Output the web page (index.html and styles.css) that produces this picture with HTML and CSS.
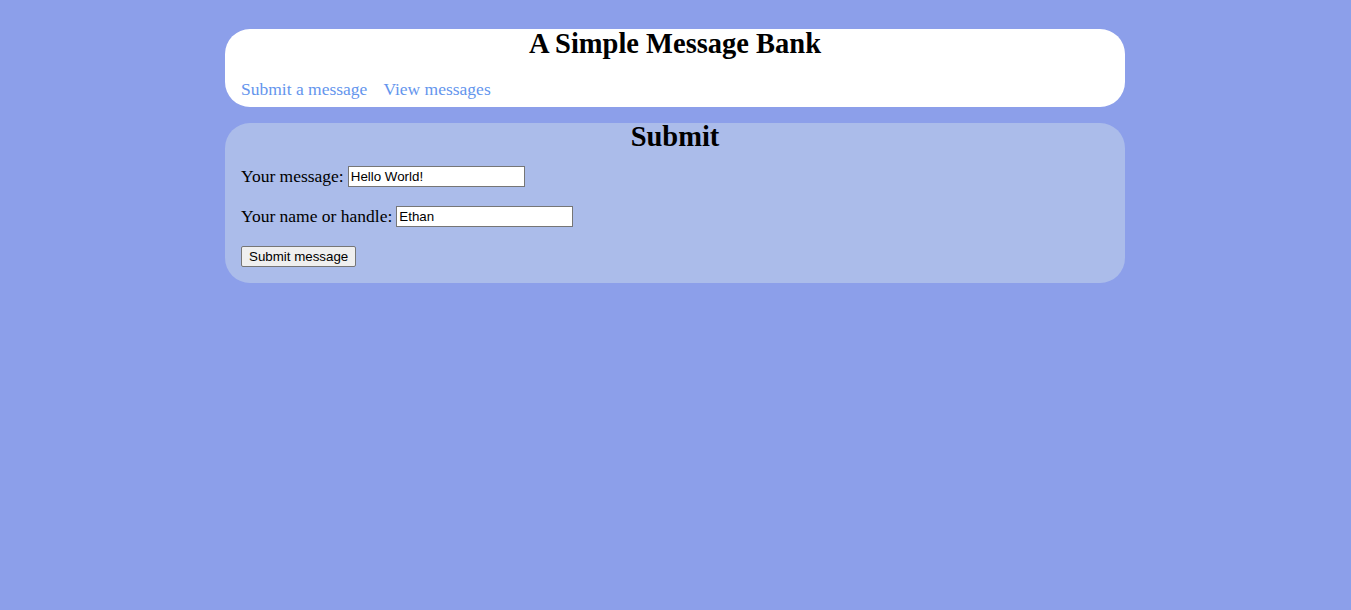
FILE: index.html
```html
<!DOCTYPE html>
<html>
<head>
<meta charset="utf-8">
<title>A Simple Message Bank</title>
<link rel="stylesheet" href="styles.css">
</head>
<body>
<div class="page">
  <header class="panel header">
    <h1 class="title">A Simple Message Bank</h1>
    <nav class="nav">
      <a class="nav-link" href="#">Submit a message</a>
      <a class="nav-link" href="#">View messages</a>
    </nav>
  </header>
  <section class="panel submit">
    <h2 class="section-title">Submit</h2>
    <form class="form">
      <div class="row">
        <label class="label">Your message:</label>
        <input class="field" type="text" value="Hello World!">
      </div>
      <div class="row">
        <label class="label">Your name or handle:</label>
        <input class="field" type="text" value="Ethan">
      </div>
      <div class="row">
        <button class="btn" type="button">Submit message</button>
      </div>
    </form>
  </section>
</div>
</body>
</html>
```
FILE: styles.css
```css
html, body {
  margin: 0;
  padding: 0;
}
body {
  background: #8c9fea;
  font-family: "Liberation Serif", "Times New Roman", serif;
  font-size: 17.5px;
  color: #000;
  padding-right: 1px;
}
.page {
  width: 900px;
  margin: 29px auto 0;
  display: flex;
  flex-direction: column;
  gap: 16px;
}
.panel {
  border-radius: 25px;
  padding: 0 16px;
}
.header {
  background: #ffffff;
  height: 78px;
  box-sizing: border-box;
}
.title {
  margin: 0;
  text-align: center;
  font-size: 28.5px;
  font-weight: bold;
  line-height: 29px;
}
.nav {
  display: flex;
  gap: 16px;
  margin-top: 21px;
  line-height: 20px;
}
.nav-link {
  color: #6495ed;
  text-decoration: none;
}
.submit {
  background: #abbcea;
  padding-bottom: 16px;
}
.section-title {
  margin: 0;
  text-align: center;
  font-size: 28.5px;
  font-weight: bold;
  line-height: 28px;
}
.form {
  display: flex;
  flex-direction: column;
  gap: 19px;
  margin-top: 15px;
}
.row {
  display: flex;
  align-items: center;
  gap: 4px;
  height: 21px;
}
.label {
  line-height: 21px;
}
.field {
  width: 177px;
  height: 21px;
  box-sizing: border-box;
  border: 1px solid #767676;
  padding: 1px 2px;
  font-family: "Liberation Sans", Arial, sans-serif;
  font-size: 13.33px;
  margin: 0;
  background: #fff;
}
.btn {
  height: 21px;
  box-sizing: border-box;
  padding: 1px 7px;
  border: 1px solid #767676;
  border-radius: 2px;
  background: #efefef;
  font-family: "Liberation Sans", Arial, sans-serif;
  font-size: 13.33px;
  color: #000;
  margin: 0;
}
```
